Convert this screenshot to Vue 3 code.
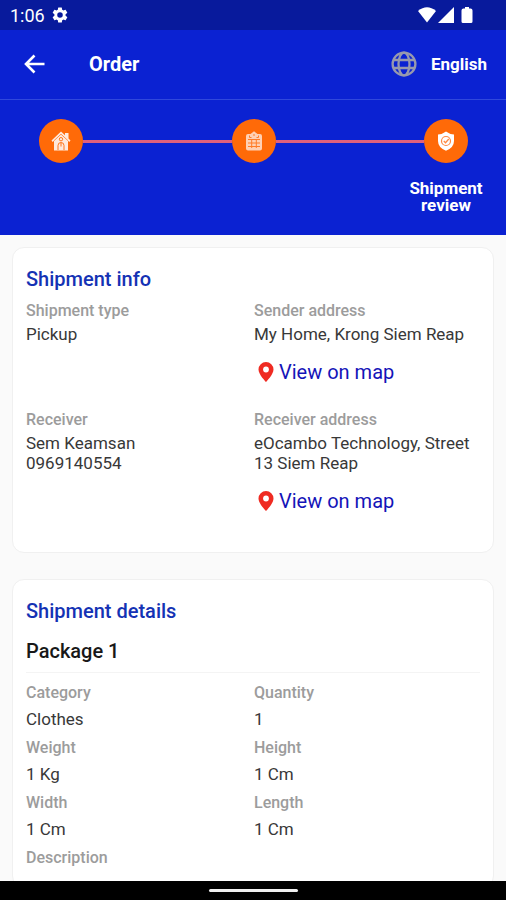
<script setup>
const shipment = [
  { label: 'Shipment type', lines: ['Pickup'] },
  { label: 'Sender address', lines: ['My Home, Krong Siem Reap'], map: true },
  { label: 'Receiver', lines: ['Sem Keamsan', '0969140554'] },
  { label: 'Receiver address', lines: ['eOcambo Technology, Street 13 Siem Reap'], map: true },
]

const details = [
  { label: 'Category', value: 'Clothes' },
  { label: 'Quantity', value: '1' },
  { label: 'Weight', value: '1 Kg' },
  { label: 'Height', value: '1 Cm' },
  { label: 'Width', value: '1 Cm' },
  { label: 'Length', value: '1 Cm' },
  { label: 'Description', value: '' },
]
</script>

<template>
  <div class="screen">
    <div class="status">
      <span class="time">1:06</span>
      <svg class="gear" viewBox="0 0 24 24" aria-hidden="true">
        <path fill="#fff" d="M19.4 13a7.800 7.800 0 0 0 0-2l2.100-1.650a.5.5 0 0 0 .12-.64l-2-3.460a.5.5 0 0 0-.61-.22l-2.490 1a7.300 7.300 0 0 0-1.690-.98l-.38-2.650A.49.49 0 0 0 14 2h-4a.49.49 0 0 0-.49.42l-.38 2.650c-.61.25-1.170.59-1.690.98l-2.490-1a.5.5 0 0 0-.61.22l-2 3.460a.5.5 0 0 0 .12.64L4.570 11a7.900 7.900 0 0 0 0 2l-2.110 1.650a.5.5 0 0 0-.12.64l2 3.460c.12.22.39.3.61.22l2.490-1c.52.4 1.080.73 1.690.98l.38 2.650c.03.24.24.42.49.42h4c.25 0 .46-.18.49-.42l.38-2.650c.61-.25 1.170-.59 1.690-.98l2.490 1c.23.09.49 0 .61-.22l2-3.460a.5.5 0 0 0-.12-.64zM12 15.700a3.700 3.700 0 1 1 0-7.400 3.700 3.700 0 0 1 0 7.400z" />
      </svg>
      <svg class="signals" viewBox="0 0 56 18" aria-hidden="true">
        <path fill="#fff" d="M0 5Q9-2.500 18 5L9 16.500z" />
        <path fill="#fff" d="M36 1v16H20z" />
        <path fill="#fff" d="M47 1h4v1.500h1.500q2 0 2 2v11q0 1.500-1.500 1.500h-8q-1.500 0-1.500-1.500v-11q0-2 2-2H47z" />
      </svg>
    </div>

    <header class="appbar">
      <button class="back" type="button" aria-label="Back">
        <svg viewBox="0 0 22 20" aria-hidden="true">
          <path d="M20.500 10H2.500M10.500 1.500L2 10l8.500 8.500" fill="none" stroke="#fff" stroke-width="2.600" />
        </svg>
      </button>
      <h1>Order</h1>
      <button class="lang" type="button">
        <svg viewBox="0 0 26 26" fill="none" stroke="#9799ae" stroke-width="2.300" aria-hidden="true">
          <circle cx="13" cy="13" r="11.400" />
          <ellipse cx="13" cy="13" rx="5.500" ry="11.400" />
          <path d="M3 9h20M3 17h20" />
        </svg>
        English
      </button>
    </header>

    <ol class="stepper">
      <li class="step">
        <span class="dot">
          <svg viewBox="0 0 20 20" aria-hidden="true">
            <path fill="#ffe9dc" d="M14 2h3.500v5.500l2 2-1.200 1.400L17 9.700V19.500H3V9.700L1.700 10.900.5 9.500 10 .5l4 3.700z" />
            <path fill="none" stroke="#ff6a08" stroke-width=".7" d="M3 9.700l7-6.500 7 6.500" />
            <circle cx="10" cy="8.200" r="1.700" fill="none" stroke="#ff6a08" stroke-width=".9" />
            <path fill="none" stroke="#ff6a08" stroke-width=".9" d="M7 19v-4.500q0-3 3-3t3 3V19M10 12v3.500" />
          </svg>
        </span>
      </li>
      <li class="line" aria-hidden="true"></li>
      <li class="step">
        <span class="dot">
          <svg viewBox="0 0 20 20" aria-hidden="true">
            <path fill="#ffd0b4" d="M4 3h2.500L10 .3 13.500 3H16q2 0 2 2v12.500q0 2-2 2H4q-2 0-2-2V5q0-2 2-2z" />
            <path fill="none" stroke="#ff7c28" stroke-width="1" d="M5.500 4.500v2h2M14.500 4.500v2h-2M4 8.500h12M4 12h12M4 15.500h12M7.700 8.500v8.500M12.300 8.500v8.500M9 4h2" />
          </svg>
        </span>
      </li>
      <li class="line" aria-hidden="true"></li>
      <li class="step" aria-current="step">
        <span class="dot">
          <svg viewBox="0 0 20 20" aria-hidden="true">
            <path fill="#fff" d="M10 .5q3.500 2.700 8 3v6.500q0 6.500-8 9.800-8-3.300-8-9.800V3.500q4.500-.3 8-3z" />
            <circle cx="10" cy="10" r="4.500" fill="none" stroke="#ff8a42" stroke-width="1.200" />
            <path d="M7.800 10l1.700 1.700 3.300-3.700" fill="none" stroke="#ff8a42" stroke-width="1.300" />
          </svg>
        </span>
        <span class="caption">Shipment<br />review</span>
      </li>
    </ol>

    <main class="content">
      <section class="card">
        <h2>Shipment info</h2>
        <dl class="grid info">
          <div v-for="item in shipment" :key="item.label" class="cell">
            <dt>{{ item.label }}</dt>
            <dd v-for="line in item.lines" :key="line">{{ line }}</dd>
            <dd v-if="item.map" class="map">
              <a href="#map">
                <svg viewBox="0 0 16 20" aria-hidden="true">
                  <path fill="#ef2b22" d="M8 0a7.500 7.500 0 0 1 7.500 7.500C15.500 12.500 8 20 8 20S.5 12.500.5 7.500A7.500 7.500 0 0 1 8 0z" />
                  <circle cx="8" cy="7.500" r="2.900" fill="#fff" />
                </svg>
                View on map
              </a>
            </dd>
          </div>
        </dl>
      </section>

      <section class="card">
        <h2>Shipment details</h2>
        <h3>Package 1</h3>
        <dl class="grid package">
          <div v-for="item in details" :key="item.label" class="cell">
            <dt>{{ item.label }}</dt>
            <dd>{{ item.value }}</dd>
          </div>
        </dl>
      </section>
    </main>

    <div class="navbar"><span class="handle"></span></div>
  </div>
</template>

<style>
body {
  margin: 0;
}
</style>

<style scoped>
.screen {
  display: flex;
  flex-direction: column;
  height: 100vh;
  overflow: hidden;
  background: #fafafa;
  color: #383838;
  font-family: Roboto, "Liberation Sans", sans-serif;
  font-size: 17px;
  line-height: 20px;
}

h1,
h2,
h3,
dl,
dd,
ol {
  margin: 0;
  padding: 0;
}

button {
  padding: 0;
  border: 0;
  background: none;
  color: inherit;
  font: inherit;
  cursor: pointer;
}

svg {
  display: block;
  flex: none;
}

.status {
  display: flex;
  flex: none;
  align-items: center;
  height: 30px;
  padding: 0 32px 0 10px;
  background: #081a9c;
  color: #fff;
}

.time {
  padding-top: 2px;
  font-size: 18px;
}

.gear {
  width: 18px;
  height: 18px;
  margin-left: 6px;
}

.signals {
  width: 56px;
  height: 18px;
  margin-left: auto;
}

.appbar {
  display: flex;
  flex: none;
  align-items: center;
  height: 67px;
  padding: 0 19px 2px 24px;
  border-bottom: 1px solid #3048dc;
  background: #0b22d2;
  color: #fff;
}

.back svg {
  width: 22px;
  height: 20px;
}

h1 {
  margin-left: 43px;
  font-size: 20px;
  font-weight: 700;
  line-height: 24px;
}

.lang {
  display: flex;
  align-items: center;
  gap: 14px;
  margin-left: auto;
  font-size: 17px;
  font-weight: 700;
}

.lang svg {
  width: 26px;
  height: 26px;
}

.stepper {
  display: flex;
  flex: none;
  align-items: flex-start;
  height: 116px;
  padding: 19px 38px 0 39px;
  background: #0b22d2;
  color: #fff;
  list-style: none;
}

.step {
  display: flex;
  flex-direction: column;
  align-items: center;
  gap: 17px;
  width: 44px;
}

.dot {
  display: flex;
  align-items: center;
  justify-content: center;
  width: 44px;
  height: 44px;
  border-radius: 50%;
  background: #ff6a08;
}

.dot svg {
  width: 20px;
  height: 20px;
}

.line {
  flex: 1;
  height: 3px;
  margin-top: 21px;
  background: #e0607c;
}

.caption {
  font-weight: 700;
  line-height: 17px;
  text-align: center;
}

.content {
  display: flex;
  flex: 1;
  flex-direction: column;
  gap: 26px;
  min-height: 0;
  padding: 12px 12px 0;
  overflow-y: auto;
  scrollbar-width: none;
}

.card {
  flex: none;
  padding: 19px 13px 13px;
  border: 1px solid #f0f0f0;
  border-radius: 12px;
  background: #fff;
}

h2 {
  color: #1432b4;
  font-size: 20px;
  font-weight: 500;
  line-height: 24px;
}

h3 {
  padding: 16px 0 9px;
  border-bottom: 1px solid #f4f4f4;
  color: #181818;
  font-size: 20px;
  font-weight: 500;
  line-height: 24px;
}

.grid {
  display: grid;
  grid-template-columns: 1fr 1fr;
  column-gap: 2px;
}

.info {
  padding-top: 10px;
}

.info .cell {
  padding-bottom: 26px;
}

.info dt {
  margin-bottom: 3px;
}

.package {
  row-gap: 9px;
  padding-top: 10px;
}

.package dt {
  margin-bottom: 6px;
}

dt {
  color: #9c9c9c;
  font-size: 16px;
  font-weight: 500;
}

.map {
  padding: 16px 0 0 4px;
}

.map a {
  display: flex;
  align-items: center;
  gap: 5px;
  color: #1414b8;
  font-size: 20px;
  line-height: 24px;
  text-decoration: none;
}

.map svg {
  width: 16px;
  height: 20px;
}

.navbar {
  display: flex;
  flex: none;
  align-items: center;
  justify-content: center;
  height: 19px;
  background: #000;
}

.handle {
  width: 89px;
  height: 3px;
  border-radius: 2px;
  background: #f0f0f0;
}
</style>
